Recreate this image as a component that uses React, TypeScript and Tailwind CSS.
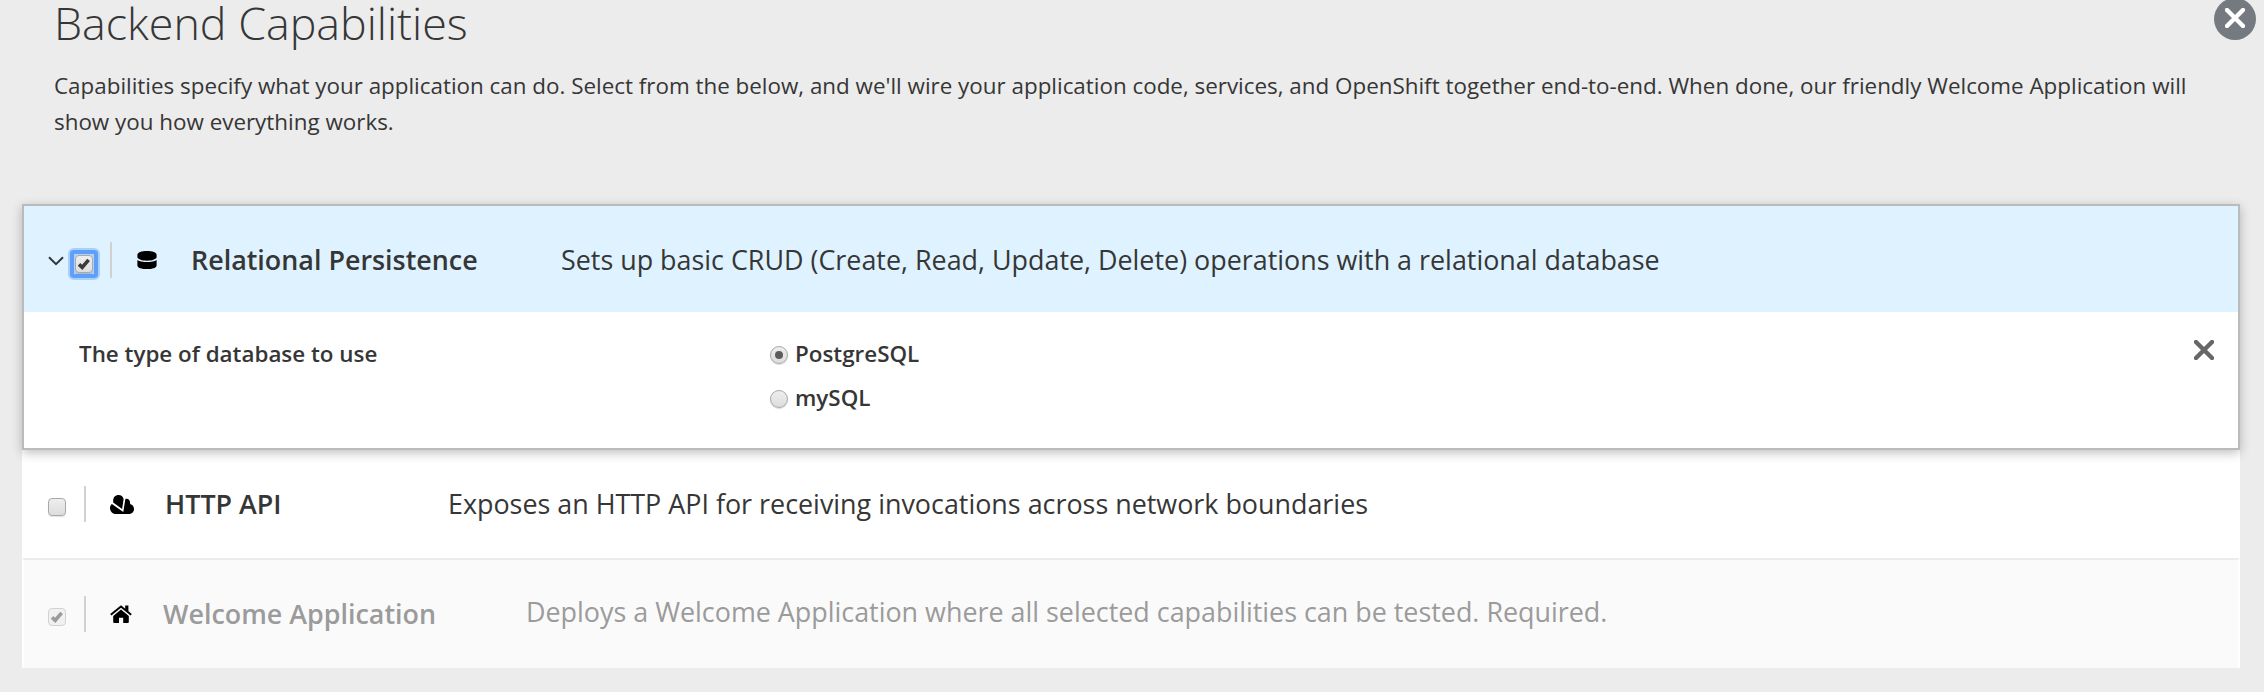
import React from "react";

type BoxProps = { checked?: boolean; disabled?: boolean; focused?: boolean };

function CheckBox({ checked, disabled, focused }: BoxProps) {
  return (
    <span
      role="checkbox"
      aria-checked={!!checked}
      className={
        focused
          ? "flex h-[32px] w-[32px] shrink-0 items-center justify-center rounded-[6px] bg-[#a9cffb]"
          : "flex h-[18px] w-[18px] shrink-0"
      }
    >
      <span className={focused ? "flex h-[28px] w-[28px] items-center justify-center rounded-[4px] bg-[#5e9ff8]" : "flex"}>
        <span className={focused ? "flex h-[20px] w-[20px] items-center justify-center bg-[#b3d1fa]" : "flex"}>
          <span
            className={
              disabled
                ? "flex h-[18px] w-[18px] items-center justify-center rounded-[4px] border-[1.5px] border-[#d2d2d2] bg-[#f1f1f1]"
                : "flex h-[18px] w-[18px] items-center justify-center rounded-[4px] border-[1.5px] border-[#a9a9a9] bg-linear-to-b from-[#eeeeee] to-[#dddddd] shadow-[0_1px_1px_rgba(0,0,0,0.12)]"
            }
          >
            {checked && (
              <svg viewBox="0 0 14 14" className={disabled ? "h-[14px] w-[14px] text-[#9b9b9b]" : "h-[14px] w-[14px] text-[#3a3a3a]"}>
                <path d="M2 7.4 5.2 10.4 11.6 2.8" fill="none" stroke="currentColor" strokeWidth="3.6" />
              </svg>
            )}
          </span>
        </span>
      </span>
    </span>
  );
}

function Radio({ label, checked }: { label: string; checked?: boolean }) {
  return (
    <label className="flex h-[44px] items-center">
      <span className="mt-[2px] flex h-[18px] w-[18px] items-center justify-center rounded-full border-[1.5px] border-[#a9a9a9] bg-linear-to-b from-[#eeeeee] to-[#dddddd] shadow-[0_1px_1px_rgba(0,0,0,0.15)]">
        {checked && <span className="h-[8px] w-[8px] rounded-full bg-[#5c5c5c]" />}
      </span>
      <span className="ml-[7px] text-[22.4px] font-semibold leading-[44px]">{label}</span>
    </label>
  );
}

function DatabaseIcon() {
  return (
    <svg viewBox="0 0 20 18" className="h-[18px] w-[20px]">
      <path d="M0.4 4C0.4 1.4 4.6 0 10 0s9.6 1.4 9.6 4v2.6C18.6 8.6 15 9.7 10 9.7S1.4 8.6 0.4 6.600z" />
      <path d="M0.4 9C2.400 10.4 6 11.100 10 11.100S17.600 10.4 19.600 9V14.400C19.600 16.800 15.400 18 10 18S0.400 16.800 0.400 14.400z" />
    </svg>
  );
}

function CloudIcon() {
  return (
    <svg viewBox="0 0 24 19" className="h-[19px] w-[24px]">
      <path d="M3.200 7.600 12.100 14 13.600 4.100C13.200 1.600 11 0 8.500 0 5.400 0 3.200 2.300 3.200 5.200z" />
      <path d="M1.900 9.100C.7 10 0 11.500 0 13c0 3.300 2.500 6 5.800 6H19c2.900 0 5-2.200 5-5 0-2.500-1.500-4.400-3.900-4.900C20.400 6 19 3.800 16.600 3.800c-.7 0-1 .1-1.300.4L13.300 17z" />
    </svg>
  );
}

function HomeIcon() {
  return (
    <svg viewBox="0 0 22 18" className="h-[18px] w-[22px]">
      <path d="M3.200 11 11 4.600l7.800 6.400V17q0 1-1 1h-4.600v-5.200H9V18H4.200q-1 0-1-1z" />
      <path d="M.8 9.700 11 1.500l10.200 8.200" fill="none" stroke="#000" strokeWidth="2" />
      <path d="M15.200.4H18.400V7l-3.200-2.600z" />
    </svg>
  );
}

function Cross({ className }: { className: string }) {
  return (
    <svg viewBox="0 0 20 20" className={className}>
      <path d="M2 2 18 18M18 2 2 18" fill="none" stroke="currentColor" strokeWidth="4.400" strokeLinecap="round" />
    </svg>
  );
}

function Divider() {
  return <span className="h-[36px] w-[2px] shrink-0 bg-[#d1d1d1]" />;
}

export default function App() {
  return (
    <main className="h-[692px] w-[2264px] overflow-hidden bg-[#ececec] font-['Open_Sans',sans-serif] text-[#363636]">
      <header className="flex h-[204px] justify-between">
        <div className="pl-[54px]">
          <h1 className="h-[55px] whitespace-nowrap text-[44.8px] font-light leading-[46px]">Backend Capabilities</h1>
          <p className="mt-[13px] w-[2150px] text-[22.4px] leading-[36px]">
            Capabilities specify what your application can do. Select from the below, and we'll wire your application code, services, and OpenShift together end-to-end. When done, our friendly Welcome Application will
            <br />
            show you how everything works.
          </p>
        </div>
        <button className="-mt-[2px] mr-[8px] flex h-[42px] w-[42px] shrink-0 items-center justify-center rounded-full bg-[#757a80] text-white">
          <Cross className="mt-[-3px] h-[20px] w-[20px]" />
        </button>
      </header>

      <section className="mx-[22px] w-[2218px]">
        <div className="relative h-[246px] border-2 border-[#bbbbbb] bg-white shadow-[0_3px_10px_rgba(3,3,3,0.25)]">
          <div className="flex h-[106px] items-center bg-[#def3ff] pl-[24px] pt-[2px]">
            <svg viewBox="0 0 16 10" className="mt-[1px] h-[10px] w-[16px] shrink-0">
              <path d="M1 1.200 8 8.200 15 1.200" fill="none" stroke="#363636" strokeWidth="2" />
            </svg>
            <span className="ml-[4px] mt-[8px]"><CheckBox checked focused /></span>
            <span className="ml-[10px] flex"><Divider /></span>
            <span className="ml-[25px] flex w-[54px]"><DatabaseIcon /></span>
            <span className="w-[370px] whitespace-nowrap text-[26.88px] font-semibold leading-[36px]">Relational Persistence</span>
            <span className="whitespace-nowrap text-[26.88px] leading-[36px]">Sets up basic CRUD (Create, Read, Update, Delete) operations with a relational database</span>
          </div>
          <div className="flex pl-[55px] pt-[20px]">
            <span className="w-[691px] text-[22.4px] font-semibold leading-[44px]">The type of database to use</span>
            <div className="flex grow flex-col">
              <Radio label="PostgreSQL" checked />
              <Radio label="mySQL" />
            </div>
            <Cross className="mr-[24px] mt-[8px] h-[20px] w-[20px] text-[#666666]" />
          </div>
        </div>

        <div className="flex h-[108px] items-center bg-white pl-[26px]">
          <span className="mt-[6px] flex"><CheckBox /></span>
          <span className="ml-[18px] flex"><Divider /></span>
          <span className="ml-[24px] flex w-[55px]"><CloudIcon /></span>
          <span className="w-[283px] whitespace-nowrap text-[26.88px] font-semibold leading-[36px]">HTTP API</span>
          <span className="whitespace-nowrap text-[26.88px] leading-[36px]">Exposes an HTTP API for receiving invocations across network boundaries</span>
        </div>

        <div className="flex h-[110px] items-center border-x-2 border-t-2 border-x-white border-t-[#ececec] bg-[#fafafa] pl-[24px] text-[#9b9b9b]">
          <span className="mt-[6px] flex"><CheckBox checked disabled /></span>
          <span className="ml-[18px] flex"><Divider /></span>
          <span className="ml-[24px] flex w-[53px] text-black"><HomeIcon /></span>
          <span className="w-[363px] whitespace-nowrap text-[26.88px] font-semibold leading-[36px]">Welcome Application</span>
          <span className="-mt-[4px] whitespace-nowrap text-[26.88px] leading-[36px]">Deploys a Welcome Application where all selected capabilities can be tested. Required.</span>
        </div>
      </section>
    </main>
  );
}
